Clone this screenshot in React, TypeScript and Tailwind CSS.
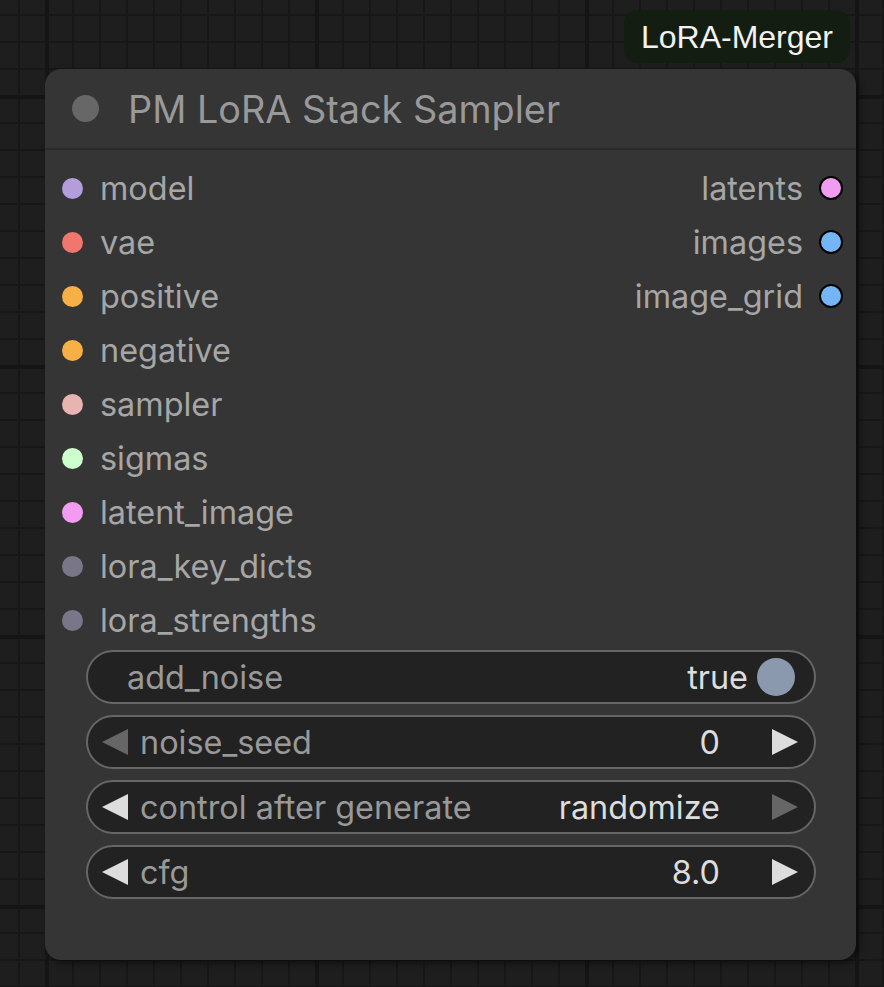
import React from "react"

type Slot = { name: string; color: string }

const inputs: Slot[] = [
  { name: "model", color: "#b39ddb" },
  { name: "vae", color: "#f0776e" },
  { name: "positive", color: "#f7b046" },
  { name: "negative", color: "#f7b046" },
  { name: "sampler", color: "#e7b4b1" },
  { name: "sigmas", color: "#cdfecd" },
  { name: "latent_image", color: "#f19cf0" },
  { name: "lora_key_dicts", color: "#79768a" },
  { name: "lora_strengths", color: "#79768a" },
]

const outputs: Slot[] = [
  { name: "latents", color: "#f19cf0" },
  { name: "images", color: "#73b5f5" },
  { name: "image_grid", color: "#73b5f5" },
]

function Arrow({ dir, dim }: { dir: "left" | "right"; dim?: boolean }) {
  return (
    <svg width="26" height="26" viewBox="0 0 26 26" className="shrink-0">
      <polygon
        points={dir === "left" ? "26,0 0,13 26,26" : "0,0 26,13 0,26"}
        fill={dim ? "#666666" : "#dddddd"}
      />
    </svg>
  )
}

function NumberWidget({
  label,
  value,
  leftDim,
  rightDim,
}: {
  label: string
  value: string
  leftDim?: boolean
  rightDim?: boolean
}) {
  return (
    <div className="h-[54px] rounded-full border-2 border-[#666666] bg-[#222222] flex items-center pl-[14px] pr-[16px]">
      <Arrow dir="left" dim={leftDim} />
      <span className="ml-[12px] mt-[3px] text-[#999999] flex-1">{label}</span>
      <span className="mt-[3px] text-[#dddddd]">{value}</span>
      <span className="ml-[52px]">
        <Arrow dir="right" dim={rightDim} />
      </span>
    </div>
  )
}

export default function App() {
  return (
    <div
      className="w-[884px] h-[987px] overflow-hidden bg-[#1e1e1e] bg-[linear-gradient(to_right,#151515_0_4px,transparent_4px),linear-gradient(to_bottom,#151515_0_4px,transparent_4px),linear-gradient(to_right,#171717_0_2px,transparent_2px),linear-gradient(to_bottom,#171717_0_2px,transparent_2px)] bg-size-[270px_270px,270px_270px,27px_27px,27px_27px] bg-position-[45px_0,0_95px,18px_0,0_14px] font-['Inter','Noto_Sans',sans-serif]"
    >
      <div className="pt-[10px] pr-[34px] flex justify-end">
        <div className="h-[53px] px-[17px] rounded-[14px] bg-[#141d11] flex items-center text-[32px] text-[#f2f2f2] font-['Liberation_Sans',Arial,sans-serif]">
          LoRA-Merger
        </div>
      </div>

      <div className="ml-[45px] mt-[6px] w-[811px] h-[891px] rounded-[16px] bg-[#353535] shadow-[3px_3px_6px_rgba(0,0,0,0.5)] flex flex-col">
        <div className="h-[81px] shrink-0 border-b-2 border-[#2b2b2b] flex items-center pl-[27px]">
          <div className="w-[27px] h-[27px] rounded-full bg-[#676767]" />
          <span className="ml-[29px] mt-[3px] text-[37.8px] text-[#999999] leading-none">PM LoRA Stack Sampler</span>
        </div>

        <div className="pt-[11px] flex justify-between text-[32.4px] leading-none">
          <div className="flex flex-col">
            {inputs.map((s) => (
              <div key={s.name} className="h-[54px] flex items-center pl-[17px]">
                <div className="w-[21px] h-[21px] rounded-full" style={{ backgroundColor: s.color }} />
                <span className="ml-[17px] mt-[3px] text-[#a6a6a6]">{s.name}</span>
              </div>
            ))}
          </div>
          <div className="flex flex-col items-end">
            {outputs.map((s) => (
              <div key={s.name} className="h-[54px] flex items-center pr-[13px]">
                <span className="mr-[16px] mt-[3px] text-[#a6a6a6]">{s.name}</span>
                <div
                  className="w-[24px] h-[24px] rounded-full border-2 border-black"
                  style={{ backgroundColor: s.color }}
                />
              </div>
            ))}
          </div>
        </div>

        <div className="mt-[3px] px-[41px] pr-[40px] flex flex-col gap-[11px] text-[32.4px] leading-none">
          <div className="h-[54px] rounded-full border-2 border-[#666666] bg-[#222222] flex items-center pl-[39px] pr-[19px]">
            <span className="flex-1 mt-[3px] text-[#999999]">add_noise</span>
            <span className="mt-[3px] text-[#dddddd]">true</span>
            <div className="ml-[9px] w-[38px] h-[38px] rounded-full bg-[#8a99ae]" />
          </div>
          <NumberWidget label="noise_seed" value="0" leftDim />
          <NumberWidget label="control after generate" value="randomize" rightDim />
          <NumberWidget label="cfg" value="8.0" />
        </div>
      </div>
    </div>
  )
}
